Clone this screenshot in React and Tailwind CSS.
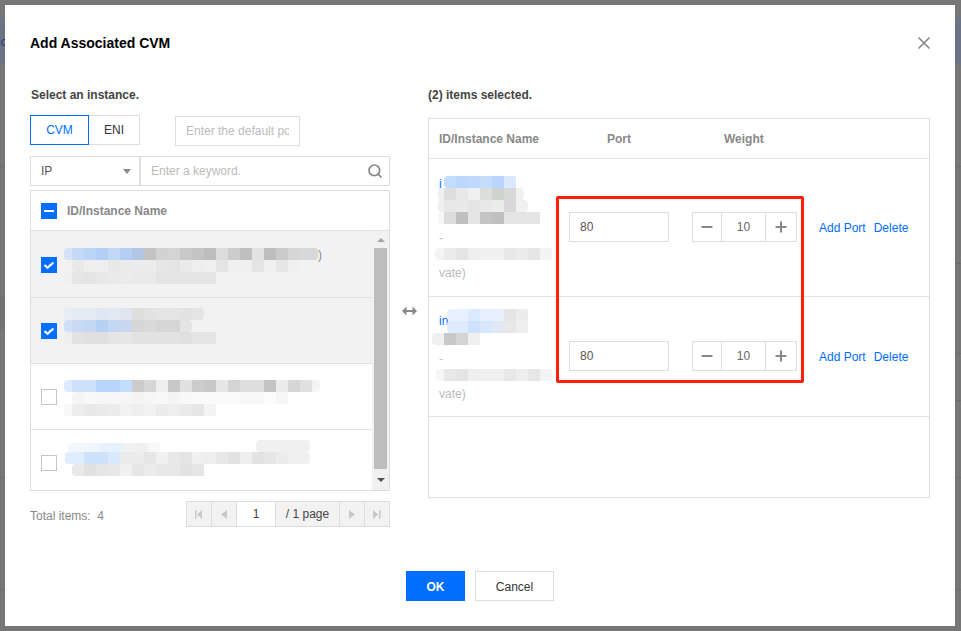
import React from 'react'
import { Minus, Plus, Search, X } from 'lucide-react'

const FONT = "font-['Liberation_Sans',Arial,sans-serif]"

// 打码区域: [x, y, 高さ, 先頭セル幅, 色..., 末尾セル幅] セルは12px幅
function Smudge({ width, height, strips }) {
  return (
    <svg width={width} height={height} className="block">
      {strips.map(([x, y, h, first, cells, last], i) => {
        let cx = x
        return (
          <g key={i}>
            {cells.map((c, j) => {
              const isFirst = j === 0
              const isLast = j === cells.length - 1 && last
              const w = isFirst ? first : isLast ? last : 12
              const left = cx
              cx += w
              return (
                <g key={j}>
                  <rect x={left} y={y} width={w} height={h} fill={c} rx={isFirst || isLast ? 4 : 0} />
                  {/* 内側の角は丸めない */}
                  {isFirst && <rect x={left + w / 2} y={y} width={w / 2} height={h} fill={c} />}
                  {isLast && <rect x={left} y={y} width={w / 2} height={h} fill={c} />}
                </g>
              )
            })}
          </g>
        )
      })}
    </svg>
  )
}

const g = (s) => s.split(' ').map((c) => '#' + (c.length === 2 ? c + c + c : c))

const leftRows = [
  {
    checked: true,
    rowClass: 'h-[67px] border-b border-[#e2e2e2] bg-[#f2f2f2]',
    boxClass: 'mt-[26px]',
    smudgeClass: 'mt-[17px]',
    tail: ')',
    strips: [
      [0, 0, 12, 8, g('d3e2f5 c4d9f6 bcd5f6 b3cff5 c1d7f5 b5cef3 b3c6e2 c4 d2 d4 c9 c4 bd dc cc bf e2 bd ca d6 d8 d8'), 6],
      [8, 12, 12, 12, g('e8 ee ee e8 ec ec ec e6 e4 ea ee f0 e4 f0 f0 e4 f0 e6 f0')],
      [0, 24, 12, 8, g('f0 e6 e4 e8 ea ec ea ea e4 e4 e4 e4 e4')],
    ],
  },
  {
    checked: true,
    rowClass: 'h-[66px] border-b border-[#e2e2e2] bg-[#f2f2f2]',
    boxClass: 'mt-[25px]',
    smudgeClass: 'mt-[10px]',
    strips: [
      [0, 0, 12, 8, g('e8edf4 e6ebf3 e6ebf3 dfe7f2 e2e9f2 e0e6ef de e2 e4 e4 e2 e4'), 12],
      [0, 12, 12, 8, g('cfe0f6 c9dbf4 c4d8f5 b8d1f2 c3d7f4 c6d7ef d6 da d6 d6 e4'), 12],
      [0, 24, 12, 8, g('ee e2 e0 e0 e4 e6 e2 e2 e2 e2 e0 e4 e4')],
    ],
  },
  {
    checked: false,
    rowClass: 'h-[66px] border-b border-[#e2e2e2] bg-white',
    boxClass: 'mt-[25px]',
    smudgeClass: 'mt-[16px]',
    strips: [
      [0, 0, 12, 8, g('deeafb cfe2fc cfe2fc b9d6fd b9d6fd c4ddfd cc d6 ee c8 e0 cc c8 e6 d4 de de c4 ec d6 e0 f4'), 8],
      [8, 12, 12, 12, g('f4 f8 f6 f6 f6 f4 f6 f8 f4 f8 fa fa fa fa f8 f8 fc f6')],
      [0, 24, 12, 8, g('f8 ed e8 ea ec f2 ee f2 ec ee ea e6 f4')],
    ],
  },
  {
    checked: false,
    rowClass: 'h-[60px] bg-white',
    boxClass: 'mt-[25px]',
    smudgeClass: 'mt-[10px]',
    strips: [
      [4, 3, 9, 20, g('f2f7fe f0f6ff e8f2ff e8f2ff f2 f0 f8')],
      [192, 0, 12, 12, g('f0 f0 f0 f0 f0'), 6],
      [1, 12, 12, 19, g('e0edfd cfe2fb cfe2fb daeafd ec ec e6 f0 e8 e4 f0 ee e8 e2 ee e2 e6 ec f0 f0'), 10],
      [8, 24, 12, 12, g('e8 e0 e6 e8 f0 e6 ec e8 e8 e2 e6')],
    ],
  },
]

function Checkbox({ state }) {
  if (state === 'mixed') {
    return (
      <span className="flex h-4 w-4 items-center justify-center bg-[#006eff]">
        <span className="h-[2px] w-[10px] bg-white" />
      </span>
    )
  }
  if (state) {
    return (
      <span className="flex h-4 w-4 items-center justify-center bg-[#006eff]">
        <svg width="16" height="16" viewBox="0 0 16 16">
          <path d="M3.500 8l3 2.700L12.500 5.500" fill="none" stroke="#fff" strokeWidth="2.200" />
        </svg>
      </span>
    )
  }
  return <span className="block h-4 w-4 border border-[#c4c4c4] bg-white" />
}

function LeftRow({ row }) {
  return (
    <div className={`flex items-start pl-[10px] ${row.rowClass}`}>
      <div className={row.boxClass}>
        <Checkbox state={row.checked} />
      </div>
      <div className={`relative ml-[7px] ${row.smudgeClass}`}>
        <Smudge width={270} height={36} strips={row.strips} />
        {row.tail && <span className="absolute left-[254px] top-[-1px] text-xs text-[#888888]">{row.tail}</span>}
      </div>
    </div>
  )
}

function Stepper() {
  return (
    <div className="flex h-[30px] w-[105px] border border-[#dddddd] text-[#666666]">
      <span className="flex w-[29px] items-center justify-center border-r border-[#dddddd]">
        <Minus className="h-4 w-4 text-[#888888]" strokeWidth={3} />
      </span>
      <span className="flex w-[44px] items-center justify-center border-r border-[#dddddd] text-xs">10</span>
      <span className="flex flex-1 items-center justify-center">
        <Plus className="h-4 w-4 text-[#888888]" strokeWidth={3} />
      </span>
    </div>
  )
}

function RightRow({ rowClass, padClass, children }) {
  return (
    <div className={`flex border-b border-[#e2e2e2] ${rowClass}`}>
      <div className="relative w-[140px] shrink-0 text-xs">{children}</div>
      <div className={`flex items-start ${padClass}`}>
        <div className="flex h-[30px] w-[100px] items-center border border-[#dddddd] pl-[10px] text-xs text-[#555555]">80</div>
        <div className="ml-[23px]">
          <Stepper />
        </div>
        <div className="ml-[22px] flex h-[30px] items-center gap-2 pt-[2px] text-xs text-[#006eff]">
          <span>Add Port</span>
          <span>Delete</span>
        </div>
      </div>
    </div>
  )
}

function PagerBtn({ children }) {
  return <span className="flex w-[25px] items-center justify-center border-r border-[#dddddd] text-[#c8c8c8]">{children}</span>
}

export default function App() {
  return (
    <div className={`relative h-[631px] w-[961px] overflow-hidden bg-[#777777] p-[5px] ${FONT}`}>
      {/* 背景の透け */}
      <div className="absolute left-0 top-[17px] h-[48px] w-[5px] overflow-hidden bg-[#6b7485]">
        <span className="absolute left-[-6px] top-[17px] text-xs leading-4 text-[#1f3c78]">ec</span>
      </div>
      <div className="absolute right-0 top-[17px] h-[48px] w-[6px] bg-[#6b7485]" />
      <div className="absolute left-0 top-[166px] h-px w-[5px] bg-[#6c6c6c]" />
      <div className="absolute left-0 top-[296px] h-[33px] w-[5px] bg-[#717171]" />
      <div className="absolute left-0 top-[477px] h-px w-[5px] bg-[#6c6c6c]" />
      <div className="absolute left-0 top-[589px] h-px w-[5px] bg-[#6c6c6c]" />
      <div className="absolute right-0 top-[166px] h-px w-[6px] bg-[#6c6c6c]" />
      <div className="absolute right-0 top-[263px] h-px w-[6px] bg-[#6c6c6c]" />
      <div className="absolute right-0 top-[353px] h-px w-[6px] bg-[#6c6c6c]" />
      <div className="absolute right-0 top-[400px] h-px w-[6px] bg-[#6c6c6c]" />
      <div className="absolute right-0 top-[477px] h-px w-[6px] bg-[#6c6c6c]" />
      <div className="absolute right-0 top-[589px] h-px w-[6px] bg-[#6c6c6c]" />

      <div className="relative h-[621px] w-[950px] bg-white px-[25px]">
        <div className="flex h-[76px] items-center justify-between">
          <h2 className="text-sm font-bold text-black">Add Associated CVM</h2>
          <X className="mr-[-4px] h-5 w-5 text-[#888888]" strokeWidth={2} />
        </div>

        <div className="flex">
          {/* 左: インスタンス選択 */}
          <div className="w-[360px] shrink-0">
            <p className="pl-px pt-[2px] text-xs font-bold leading-6 text-[#444444]">Select an instance.</p>
            <div className="mt-[8px] flex items-start">
              <span className="flex h-[30px] w-[59px] items-center justify-center border border-[#006eff] text-xs text-[#006eff]">CVM</span>
              <span className="flex h-[30px] w-[51px] items-center justify-center border border-l-0 border-[#dddddd] text-xs text-[#333333]">ENI</span>
              <input
                readOnly
                placeholder="Enter the default port"
                className="ml-[35px] mt-px h-[30px] w-[125px] border border-[#dddddd] px-[10px] text-xs outline-none placeholder:text-[#bbbbbb]"
              />
            </div>
            <div className="mt-[10px] flex h-[30px]">
              <div className="flex w-[110px] items-center justify-between border border-[#dddddd] pl-[10px] pr-[8px] text-xs text-[#555555]">
                <span>IP</span>
                <span className="h-0 w-0 border-x-[4px] border-t-[5px] border-x-transparent border-t-[#888888]" />
              </div>
              <div className="flex flex-1 items-center justify-between border border-[#dddddd] pl-[10px] pr-[6px]">
                <input readOnly placeholder="Enter a keyword." className="w-[200px] text-xs outline-none placeholder:text-[#bbbbbb]" />
                <Search className="h-4 w-4 text-[#888888]" strokeWidth={2.6} />
              </div>
            </div>
            <div className="mt-[4px] h-[301px] border border-[#dddddd]">
              <div className="flex h-[40px] items-center border-b border-[#e2e2e2] pl-[10px]">
                <Checkbox state="mixed" />
                <span className="ml-[10px] text-xs font-bold text-[#888888]">ID/Instance Name</span>
              </div>
              <div className="flex">
                <div className="w-[341px]">
                  {leftRows.map((row, i) => (
                    <LeftRow key={i} row={row} />
                  ))}
                </div>
                <div className="flex h-[259px] w-[17px] flex-col items-center bg-[#f1f1f1]">
                  <span className="mt-[7px] h-0 w-0 border-x-[4px] border-b-[4px] border-x-transparent border-b-[#a3a3a3]" />
                  <span className="mt-[6px] h-[221px] w-[13px] bg-[#bdbdbd]" />
                  <span className="mt-[9px] h-0 w-0 border-x-[4px] border-t-[4px] border-x-transparent border-t-[#505050]" />
                </div>
              </div>
            </div>
            <div className="mt-[10px] flex items-center justify-between">
              <span className="pt-[3px] text-xs text-[#888888]">Total items:&nbsp; 4</span>
              <div className="flex h-[26px] w-[204px] border border-[#dddddd] bg-[#f2f2f2] text-xs text-[#444444]">
                <PagerBtn>
                  <svg width="8" height="9" viewBox="0 0 8 9"><path d="M0 0h1.500v9H0zM7 0v9L2 4.500z" fill="currentColor" /></svg>
                </PagerBtn>
                <PagerBtn>
                  <svg width="6" height="9" viewBox="0 0 6 9"><path d="M6 0v9L0 4.500z" fill="currentColor" /></svg>
                </PagerBtn>
                <span className="flex w-[39px] items-center justify-center border-r border-[#dddddd] bg-white">1</span>
                <span className="flex w-[64px] items-center justify-center border-r border-[#dddddd]">/ 1 page</span>
                <PagerBtn>
                  <svg width="6" height="9" viewBox="0 0 6 9"><path d="M0 0v9L6 4.500z" fill="currentColor" /></svg>
                </PagerBtn>
                <span className="flex flex-1 items-center justify-center text-[#c8c8c8]">
                  <svg width="8" height="9" viewBox="0 0 8 9"><path d="M0 0v9L5 4.500zM6 0h1.500v9H6z" fill="currentColor" /></svg>
                </span>
              </div>
            </div>
          </div>

          {/* 中央の矢印 */}
          <div className="flex w-[38px] shrink-0 justify-center pt-[225px]">
            <svg width="15" height="10" viewBox="0 0 15 10">
              <path d="M0 5l4.500-4.500v3.500h6V.5L15 5l-4.500 4.500V6h-6v3.500z" fill="#888888" />
            </svg>
          </div>

          {/* 右: 選択済み */}
          <div className="w-[502px] shrink-0">
            <p className="pt-[2px] text-xs font-bold leading-6 text-[#444444]">(2) items selected.</p>
            <div className="mt-[11px] h-[380px] border border-[#dddddd]">
              <div className="flex h-[40px] items-center border-b border-[#e2e2e2] text-xs font-bold text-[#888888]">
                <span className="w-[178px] pl-[10px]">ID/Instance Name</span>
                <span className="w-[117px]">Port</span>
                <span>Weight</span>
              </div>
              <RightRow rowClass="h-[138px]" padClass="pt-[53px]">
                <span className="absolute left-[10px] top-[17px] text-[#006eff]">i</span>
                <div className="absolute left-[6px] top-[17px]">
                  <Smudge
                    width={122}
                    height={90}
                    strips={[
                      [9, 0, 12, 12, g('c4dcfd bcd6fc bfd8fd c6dcfd b8d5fc dae9fe')],
                      [3, 12, 12, 6, g('f0 de e8 f0 dcdedc d0d2d0 d8 f0'), 8],
                      [3, 24, 12, 6, g('f0 e8 e8 e4 e8 ec d8 f0'), 12],
                      [3, 36, 12, 6, g('f6 dc c0 e4 c4 c0 e4 e4 e4')],
                      [0, 72, 12, 9, g('f4 eb e4 ee f0 f0 e8 ec e6 f4')],
                    ]}
                  />
                </div>
                <span className="absolute left-[10px] top-[71px] text-[#bbbbbb]">-</span>
                <span className="absolute left-[10px] top-[106px] text-[#bbbbbb]">vate)</span>
              </RightRow>
              <RightRow rowClass="h-[120px]" padClass="pt-[44px]">
                <span className="absolute left-[10px] top-[16px] text-[#006eff]">in</span>
                <div className="absolute left-[3px] top-[12px]">
                  <Smudge
                    width={122}
                    height={90}
                    strips={[
                      [15, 0, 12, 21, g('e8f1fe dceafe e6effe e8f0fc e4 ec')],
                      [15, 12, 12, 21, g('deebfd cfe2fd d8e7fc e0e8f4 e8 ee')],
                      [0, 24, 12, 12, g('f0 c8 d4 f0')],
                      [4, 60, 12, 8, g('f6 e8 e4 ee f0 f0 e8 ee e6 f4')],
                    ]}
                  />
                </div>
                <span className="absolute left-[10px] top-[54px] text-[#bbbbbb]">-</span>
                <span className="absolute left-[10px] top-[89px] text-[#bbbbbb]">vate)</span>
              </RightRow>
            </div>
          </div>
        </div>

        <div className="mt-[44px] flex justify-center gap-[10px]">
          <span className="flex h-[30px] w-[59px] items-center justify-center bg-[#006eff] pt-[2px] text-xs font-bold text-white">OK</span>
          <span className="flex h-[30px] w-[79px] items-center justify-center border border-[#dddddd] pt-[2px] text-xs text-[#333333]">Cancel</span>
        </div>

        {/* 赤枠の注釈 */}
        <div className="absolute left-[551px] top-[191px] h-[187px] w-[248px] rounded-[2px] border-[3px] border-[#ff1c10]" />
      </div>
    </div>
  )
}
